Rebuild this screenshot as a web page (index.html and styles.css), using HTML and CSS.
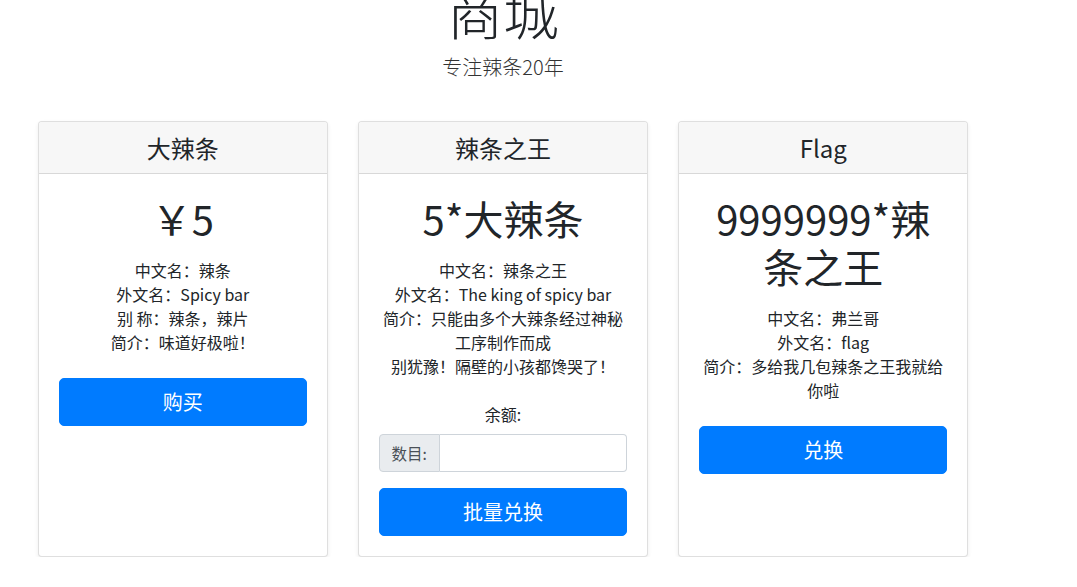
FILE: index.html
```html
<!DOCTYPE html>
<html lang="zh-CN">
<head>
<meta charset="utf-8">
<title>商城</title>
<link rel="stylesheet" href="styles.css">
</head>
<body>
<div class="page">
  <div class="pricing-header">
    <h1 class="display">商城</h1>
    <p class="lead">专注辣条20年</p>
  </div>
  <div class="deck">
    <div class="card">
      <div class="card-header"><h4>大辣条</h4></div>
      <div class="card-body">
        <h1 class="price">￥5</h1>
        <ul class="info">
          <li>中文名：辣条</li>
          <li>外文名：Spicy bar</li>
          <li>别 称：辣条，辣片</li>
          <li>简介：味道好极啦！</li>
        </ul>
        <button class="btn">购买</button>
      </div>
    </div>
    <div class="card">
      <div class="card-header"><h4>辣条之王</h4></div>
      <div class="card-body">
        <h1 class="price">5*大辣条</h1>
        <ul class="info">
          <li>中文名：辣条之王</li>
          <li>外文名：The king of spicy bar</li>
          <li>简介：只能由多个大辣条经过神秘工序制作而成</li>
          <li>别犹豫！隔壁的小孩都馋哭了！</li>
        </ul>
        <div class="balance">余额:</div>
        <div class="input-group">
          <span class="prepend">数目:</span>
          <input class="field" type="text">
        </div>
        <button class="btn">批量兑换</button>
      </div>
    </div>
    <div class="card">
      <div class="card-header"><h4>Flag</h4></div>
      <div class="card-body">
        <h1 class="price">9999999*辣条之王</h1>
        <ul class="info">
          <li>中文名：弗兰哥</li>
          <li>外文名：flag</li>
          <li>简介：多给我几包辣条之王我就给你啦</li>
        </ul>
        <button class="btn">兑换</button>
      </div>
    </div>
  </div>
</div>
</body>
</html>
```
FILE: styles.css
```css
* { box-sizing: border-box; }
html, body { margin: 0; padding: 0; background: #fff; }
body {
  font-family: "Noto Sans CJK SC", "Noto Sans", sans-serif;
  font-size: 16px;
  line-height: 1.5;
  color: #212529;
  overflow: hidden;
}
.page {
  width: 930px;
  margin-left: 38px;
}
.pricing-header {
  text-align: center;
  margin-top: -23px;
  padding-bottom: 23px;
}
.display {
  font-size: 56px;
  font-weight: 300;
  line-height: 1.2;
  margin: 0 0 8px;
}
.lead {
  font-size: 20px;
  font-weight: 300;
  line-height: 30px;
  margin: 0 0 16px;
  color: #333;
}
.deck {
  display: flex;
  gap: 30px;
}
.card {
  flex: 1 1 0;
  display: flex;
  flex-direction: column;
  border: 1px solid rgba(0,0,0,.125);
  border-radius: 4px;
  box-shadow: 0 2px 4px rgba(0,0,0,.075);
  text-align: center;
  height: 436px;
  background: #fff;
}
.card-header {
  background: #f7f7f7;
  border-bottom: 1px solid rgba(0,0,0,.125);
  padding: 11px 20px;
  border-radius: 3px 3px 0 0;
}
.card-header h4 {
  margin: 0;
  font-size: 24px;
  font-weight: 400;
  line-height: 29px;
}
.card-body {
  padding: 20px;
  flex: 1;
}
.price {
  margin: 0 0 16px;
  font-size: 40px;
  font-weight: 400;
  line-height: 48px;
}
.info {
  list-style: none;
  padding: 0;
  margin: 0 0 24px;
  font-size: 16px;
  line-height: 24px;
}
.balance {
  font-size: 16px;
  line-height: 24px;
  margin-bottom: 8px;
}
.input-group {
  display: flex;
  height: 38px;
  margin-bottom: 16px;
}
.prepend {
  display: flex;
  align-items: center;
  padding: 0 12px;
  background: #e9ecef;
  border: 1px solid #ced4da;
  border-radius: 4px 0 0 4px;
  color: #495057;
  font-size: 15.5px;
}
.field {
  flex: 1;
  min-width: 0;
  border: 1px solid #ced4da;
  border-left: 0;
  border-radius: 0 4px 4px 0;
  font: inherit;
  padding: 6px 12px;
}
.btn {
  display: block;
  width: 100%;
  height: 48px;
  background: #007bff;
  border: 1px solid #007bff;
  border-radius: 5px;
  color: #fff;
  font-family: inherit;
  font-size: 20px;
  line-height: 30px;
  padding: 0;
}
```
